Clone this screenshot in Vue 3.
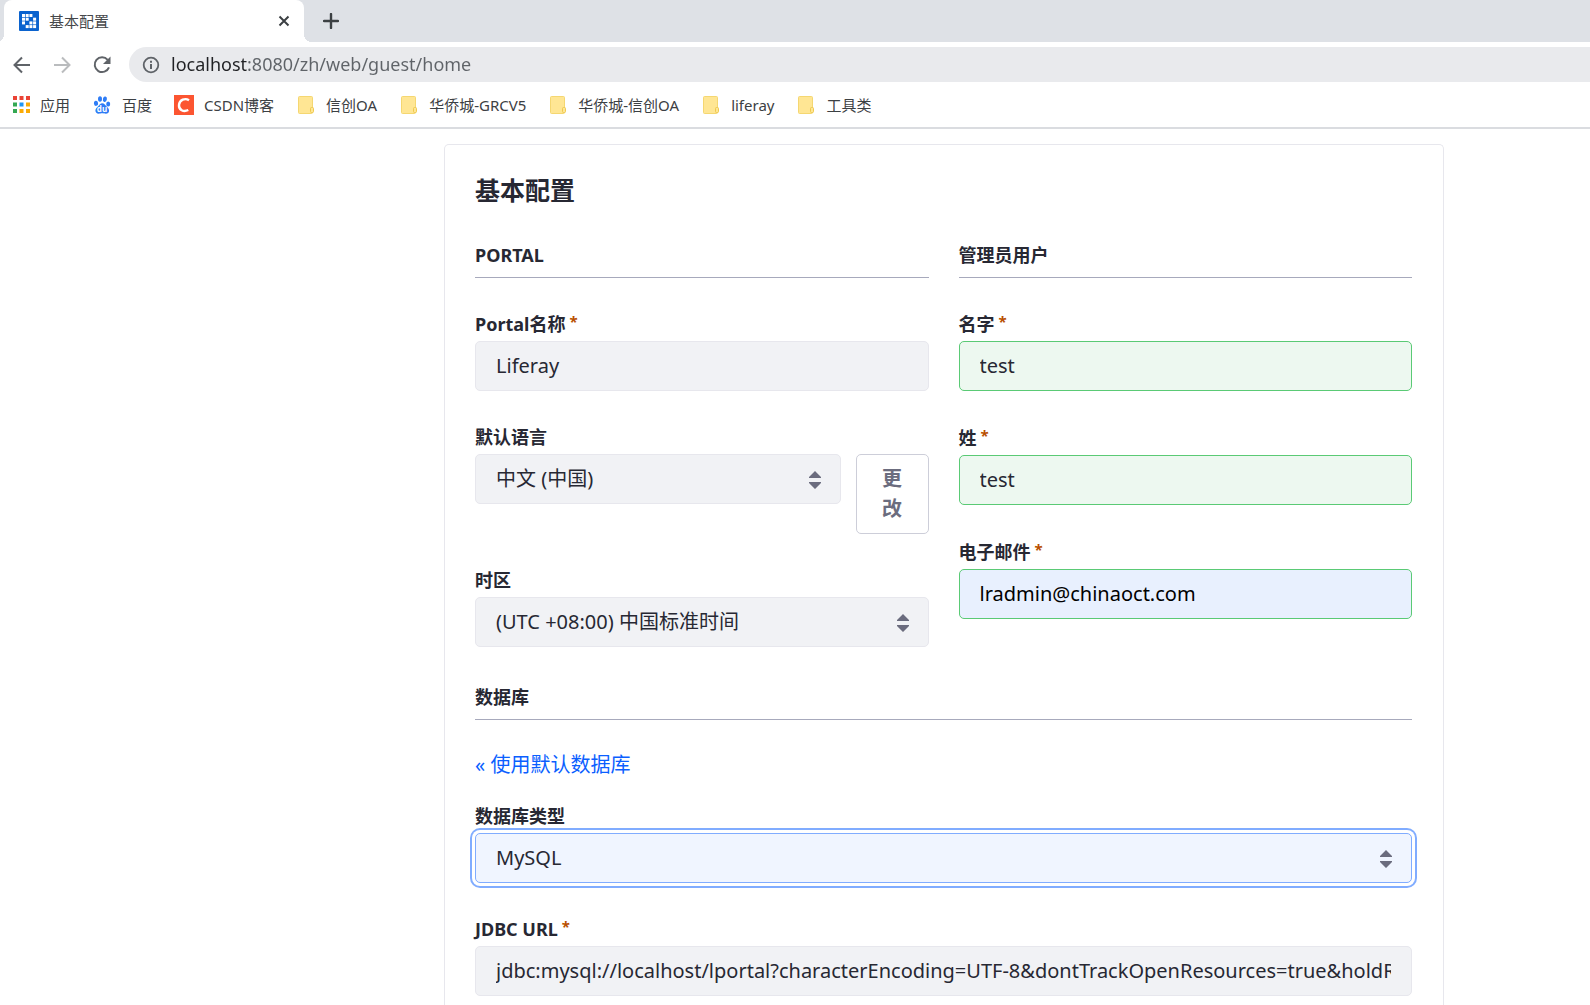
<script setup>
import { ref } from 'vue'

const bookmarks = [
  { label: '应用', icon: 'apps' },
  { label: '百度', icon: 'baidu' },
  { label: 'CSDN博客', icon: 'csdn' },
  { label: '信创OA', icon: 'folder' },
  { label: '华侨城-GRCV5', icon: 'folder' },
  { label: '华侨城-信创OA', icon: 'folder' },
  { label: 'liferay', icon: 'folder' },
  { label: '工具类', icon: 'folder' },
]

const appDots = [
  ['#ea4335', '#ea4335', '#ea4335'],
  ['#34a853', '#2196f3', '#fbab05'],
  ['#34a853', '#fbab05', '#fbab05'],
]

// Cells of the 4 x 4 tab icon.
const faviconRows = [
  ['#fff', '#fff', '#fff', '#0b63ce'],
  ['#fff', '#fff', '#0b63ce', '#fff'],
  ['#fff', '#0b63ce', '#fff', '#fff'],
  ['#0b63ce', '#fff', '#fff', '#fff'],
]

const adminFields = ref([
  { id: 'firstName', label: '名字', type: 'text', value: 'test', autofilled: false },
  { id: 'lastName', label: '姓', type: 'text', value: 'test', autofilled: false },
  { id: 'email', label: '电子邮件', type: 'email', value: 'lradmin@chinaoct.com', autofilled: true },
])

const address = ref('localhost:8080/zh/web/guest/home')
const portalName = ref('Liferay')
const jdbcUrl = ref('jdbc:mysql://localhost/lportal?characterEncoding=UTF-8&dontTrackOpenResources=true&holdResultsOpenOverStatementClose=true&serverTimezone=GMT&useFastDateParsing=false&useUnicode=true')
</script>

<template>
  <div class="window">
    <header class="chrome">
      <div class="tabs">
        <div class="tab">
          <svg class="favicon" viewBox="0 0 20 20" aria-hidden="true">
            <rect width="20" height="20" rx="1" fill="#0b63ce" />
            <template v-for="(row, y) in faviconRows" :key="y">
              <rect v-for="(fill, x) in row" :key="x" :x="3 + x * 3.700" :y="3 + y * 3.700" width="3" height="3" :fill="fill" />
            </template>
          </svg>
          <span class="tab-title">基本配置</span>
          <button class="icon-button" type="button" aria-label="关闭">
            <svg width="12" height="12" viewBox="0 0 12 12"><path d="M1.500 1.500l9 9M10.500 1.500l-9 9" stroke="#3c4043" stroke-width="2" /></svg>
          </button>
        </div>
        <button class="icon-button new-tab" type="button" aria-label="新标签页">
          <svg width="16" height="16" viewBox="0 0 16 16"><path d="M8 1v14M1 8h14" stroke="#3c4043" stroke-width="2.400" stroke-linecap="round" /></svg>
        </button>
      </div>

      <div class="toolbar">
        <button class="icon-button" type="button" aria-label="后退">
          <svg width="20" height="20" viewBox="0 0 20 20"><path d="M18 10H3M10 2.500L2.500 10l7.500 7.500" fill="none" stroke="#5f6368" stroke-width="2" /></svg>
        </button>
        <button class="icon-button" type="button" aria-label="前进">
          <svg width="20" height="20" viewBox="0 0 20 20"><path d="M2 10h15M10 2.500l7.500 7.500-7.500 7.500" fill="none" stroke="#babcbe" stroke-width="2" /></svg>
        </button>
        <button class="icon-button" type="button" aria-label="重新加载">
          <svg width="20" height="20" viewBox="0 0 20 20">
            <path d="M15.700 4.800A7.400 7.400 0 1 0 17 12.400" fill="none" stroke="#5f6368" stroke-width="2" />
            <path d="M18.500 1.500v7.500H11z" fill="#5f6368" />
          </svg>
        </button>
        <div class="omnibox">
          <svg width="18" height="18" viewBox="0 0 18 18" aria-hidden="true">
            <circle cx="9" cy="9" r="7.300" fill="none" stroke="#5f6368" stroke-width="1.800" />
            <path d="M9 8v5M9 4.700v2" stroke="#5f6368" stroke-width="2" />
          </svg>
          <input v-model="address" class="address" type="text" aria-label="地址" spellcheck="false">
        </div>
      </div>

      <nav class="bookmarks">
        <a v-for="item in bookmarks" :key="item.label" class="bookmark" href="#">
          <svg v-if="item.icon === 'apps'" width="20" height="20" viewBox="0 0 20 20" aria-hidden="true">
            <template v-for="(row, y) in appDots" :key="y">
              <rect v-for="(fill, x) in row" :key="x" :x="3 + x * 6.500" :y="1 + y * 6.500" width="4" height="4" :fill="fill" />
            </template>
          </svg>
          <svg v-else-if="item.icon === 'baidu'" width="20" height="20" viewBox="0 0 20 20" aria-hidden="true">
            <g fill="#2e7cf6">
              <ellipse cx="4" cy="8.300" rx="2.100" ry="2.600" transform="rotate(-10 4 8.300)" />
              <ellipse cx="8" cy="4" rx="2" ry="2.800" />
              <ellipse cx="12.900" cy="4.200" rx="2" ry="2.800" transform="rotate(12 12.900 4.200)" />
              <ellipse cx="16.200" cy="9" rx="2" ry="2.600" />
              <path d="M10.300 8.200c2 0 2.700 1.600 3.800 2.800 1.400 1.500 3 2.500 3 4.700 0 2-1.500 3-3.300 3-1.400 0-2.200-.4-3.600-.4s-2.100.4-3.500.4c-2 0-3.300-1.100-3.300-3.100 0-2.200 1.700-3.100 3-4.600 1-1.200 1.900-2.800 3.900-2.800z" />
            </g>
            <text x="10" y="17" text-anchor="middle" font-size="8" font-weight="700" fill="#fff">du</text>
          </svg>
          <svg v-else-if="item.icon === 'csdn'" width="20" height="20" viewBox="0 0 20 20" aria-hidden="true">
            <rect width="20" height="20" fill="#fc5531" />
            <path d="M15 5.200C11 2.700 5.500 4.800 5 10c-.4 5 4.500 7.300 9.300 5" fill="none" stroke="#fff" stroke-width="2.400" />
          </svg>
          <svg v-else width="20" height="20" viewBox="0 0 20 20" aria-hidden="true">
            <rect x="2.500" y="1.500" width="14" height="17" rx="1" fill="#ffe694" stroke="#f5d771" />
            <rect x="14.500" y="12.500" width="3" height="5" rx="1" fill="#ffe694" stroke="#efc94f" />
          </svg>
          <span>{{ item.label }}</span>
        </a>
      </nav>
    </header>

    <main class="page">
      <form class="card" @submit.prevent>
        <h1 class="title">基本配置</h1>
        <div class="columns">
          <section class="fields">
            <h2 class="heading">PORTAL</h2>
            <div class="field">
              <label for="portalName">Portal名称 <span class="star">*</span></label>
              <input id="portalName" v-model="portalName" class="control" type="text">
            </div>
            <div class="field">
              <label for="language">默认语言</label>
              <div class="language-row">
                <div class="select-box">
                  <select id="language" class="control"><option>中文 (中国)</option></select>
                  <svg class="caret" viewBox="0 0 12 18" aria-hidden="true"><path d="M6 0l6 6v1H0V6zM6 18l6-6v-1H0v1z" fill="#6b6c7e" /></svg>
                </div>
                <button class="change" type="button">更改</button>
              </div>
            </div>
            <div class="field">
              <label for="timezone">时区</label>
              <div class="select-box">
                <select id="timezone" class="control"><option>(UTC +08:00) 中国标准时间</option></select>
                <svg class="caret" viewBox="0 0 12 18" aria-hidden="true"><path d="M6 0l6 6v1H0V6zM6 18l6-6v-1H0v1z" fill="#6b6c7e" /></svg>
              </div>
            </div>
          </section>

          <section class="admin">
            <h2 class="heading">管理员用户</h2>
            <div class="admin-fields">
              <div v-for="item in adminFields" :key="item.id" class="field">
                <label :for="item.id">{{ item.label }} <span class="star">*</span></label>
                <input :id="item.id" v-model="item.value" class="control valid" :class="{ autofilled: item.autofilled }" :type="item.type">
              </div>
            </div>
          </section>
        </div>

        <section class="database">
          <h2 class="heading">数据库</h2>
          <a class="default-link" href="#">« 使用默认数据库</a>
          <div class="fields">
            <div class="field">
              <label for="databaseType">数据库类型</label>
              <div class="select-box">
                <select id="databaseType" class="control focused"><option>MySQL</option></select>
                <svg class="caret" viewBox="0 0 12 18" aria-hidden="true"><path d="M6 0l6 6v1H0V6zM6 18l6-6v-1H0v1z" fill="#6b6c7e" /></svg>
              </div>
            </div>
            <div class="field">
              <label for="jdbcUrl">JDBC URL <span class="star">*</span></label>
              <input id="jdbcUrl" v-model="jdbcUrl" class="control" type="text" spellcheck="false">
            </div>
          </div>
        </section>
      </form>
    </main>
  </div>
</template>

<style>
body {
  margin: 0;
  background: #fff;
}
</style>

<style scoped>
.window,
.window * {
  box-sizing: border-box;
}

.window {
  display: flex;
  flex-direction: column;
  height: 100vh;
  overflow: hidden;
  font-family: "Noto Sans", "Noto Sans CJK SC", sans-serif;
  color: #272833;
}

button,
input,
select {
  font-family: inherit;
}

svg {
  display: block;
  flex: none;
}

.chrome {
  flex: none;
  border-bottom: 2px solid #dadce0;
}

.tabs {
  display: flex;
  align-items: center;
  height: 42px;
  padding-left: 4px;
  background: #dee1e6;
}

.tab {
  position: relative;
  display: flex;
  align-items: center;
  width: 300px;
  height: 42px;
  padding: 0 14px 0 15px;
  border-radius: 8px 8px 0 0;
  background: #fff;
}

.tab::before,
.tab::after {
  position: absolute;
  bottom: 0;
  width: 8px;
  height: 8px;
  content: "";
}

.tab::before {
  right: 100%;
  background: radial-gradient(circle at 0 0, #dee1e6 8px, #fff 8px);
}

.tab::after {
  left: 100%;
  background: radial-gradient(circle at 100% 0, #dee1e6 8px, #fff 8px);
}

.favicon {
  width: 20px;
  height: 20px;
}

.tab-title {
  flex: 1;
  margin-left: 10px;
  font-size: 15px;
  line-height: 20px;
  color: #45474a;
}

.icon-button {
  display: flex;
  padding: 0;
  border: 0;
  background: none;
}

.new-tab {
  margin-left: 19px;
}

.toolbar {
  display: flex;
  align-items: center;
  gap: 20px;
  height: 45px;
  padding-left: 12px;
}

.omnibox {
  display: flex;
  flex: 1;
  align-items: center;
  gap: 11px;
  height: 35px;
  margin-left: -3px;
  padding-left: 13px;
  border-radius: 18px 0 0 18px;
  background: #e9eaed;
}

/* The host part of the address is darker than the rest. */
.address {
  flex: 1;
  height: 30px;
  padding: 0 0 2px;
  border: 0;
  outline: 0;
  background: linear-gradient(90deg, #202124 77px, #5f6368 77px);
  background-clip: text;
  color: #5f6368;
  -webkit-text-fill-color: transparent;
  font-size: 18px;
}

.bookmarks {
  display: flex;
  align-items: center;
  gap: 22px;
  height: 40px;
  padding: 0 10px 4px;
}

.bookmark {
  display: flex;
  align-items: center;
  gap: 10px;
  font-size: 15px;
  line-height: 20px;
  color: #3c4043;
  text-decoration: none;
  white-space: nowrap;
}

.page {
  display: flex;
  flex: 1;
  min-height: 0;
  padding: 15px 146px 0 444px;
}

.card {
  flex: 1;
  min-width: 0;
  padding: 30px 31px 0 30px;
  border: 1px solid #e7e7ed;
  border-bottom: 0;
  border-radius: 5px 5px 0 0;
}

.title {
  margin: 0 0 37px;
  font-size: 25px;
  line-height: 30px;
}

.columns {
  display: grid;
  grid-template-columns: 1fr 1fr;
  align-items: start;
  gap: 30px;
}

.fields,
.admin {
  display: flex;
  flex-direction: column;
  gap: 33px;
}

.admin-fields {
  display: flex;
  flex-direction: column;
  gap: 34px;
}

.heading {
  margin: 0;
  padding-bottom: 9px;
  border-bottom: 1px solid #a7a9bc;
  font-size: 18px;
  line-height: 26px;
}

.field label {
  display: flex;
  gap: 4px;
  height: 26px;
  margin-bottom: 4px;
  font-size: 18px;
  font-weight: 700;
  line-height: 26px;
}

.star {
  color: #b95000;
  font-size: 15px;
  line-height: 20px;
}

.control {
  display: block;
  width: 100%;
  height: 50px;
  padding: 0 20px 1px;
  border: 1px solid #e7e7ed;
  border-radius: 5px;
  outline: 0;
  background: #f1f2f5;
  color: #272833;
  font-size: 20px;
  appearance: none;
}

.valid {
  border-color: #5aca75;
  background: #edf8f0;
}

.autofilled {
  background: #e8f0fe;
  color: #000;
}

.focused {
  border-color: #80acff;
  background: #f0f5ff;
  box-shadow: 0 0 0 3px #fff, 0 0 0 5px #80acff;
}

.select-box {
  position: relative;
  flex: 1;
}

.caret {
  position: absolute;
  top: 17px;
  right: 20px;
  width: 12px;
  height: 18px;
  pointer-events: none;
}

.language-row {
  display: flex;
  align-items: flex-start;
  gap: 15px;
}

.change {
  width: 73px;
  padding: 9px 25px;
  border: 1px solid #cdced9;
  border-radius: 5px;
  background: #fff;
  color: #6b6c7e;
  font-size: 20px;
  font-weight: 600;
  line-height: 30px;
}

.database {
  margin-top: 37px;
}

.default-link {
  display: inline-block;
  margin: 30px 0 23px;
  color: #0b5fff;
  font-size: 20px;
  line-height: 30px;
  text-decoration: none;
  vertical-align: top;
}
</style>
